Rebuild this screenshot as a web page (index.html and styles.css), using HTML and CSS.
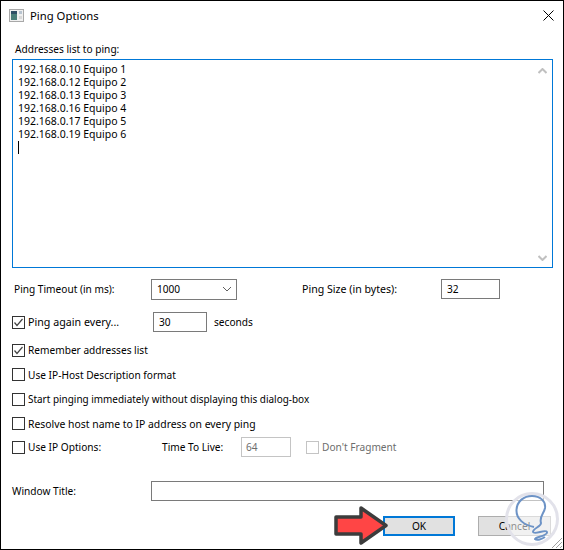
FILE: index.html
```html
<!DOCTYPE html>
<html lang="en">
<head>
    <meta charset="UTF-8">
    <title>Ping Options</title>
    <link rel="stylesheet" href="styles.css">
</head>
<body>
    <div class="dialog">
        <div class="titlebar">
            <svg class="app-icon" width="15" height="13" viewBox="0 0 15 13">
                <rect x="0.5" y="0.5" width="14" height="12" fill="#f0f0f0" stroke="#a8a8a8"/>
                <rect x="2" y="2" width="6" height="9" fill="#4a7d78"/>
                <rect x="2" y="2" width="6" height="3" fill="#2f4f66"/>
                <rect x="10" y="2" width="3" height="3" fill="#b8c4d0"/>
                <rect x="10" y="7" width="3" height="3" fill="#d8d8d8"/>
            </svg>
            <span class="title">Ping Options</span>
            <svg class="close" width="11" height="11" viewBox="0 0 11 11">
                <path d="M0.5 0.5L10.5 10.5M10.5 0.5L0.5 10.5" stroke="#000" stroke-width="1" fill="none"/>
            </svg>
        </div>

        <div class="content">
            <div class="list-label">Addresses list to ping:</div>
            <div class="address-box">
                <div class="address-lines">
                    <div>192.168.0.10 Equipo 1</div>
                    <div>192.168.0.12 Equipo 2</div>
                    <div>192.168.0.13 Equipo 3</div>
                    <div>192.168.0.16 Equipo 4</div>
                    <div>192.168.0.17 Equipo 5</div>
                    <div>192.168.0.19 Equipo 6</div>
                    <div class="caret"></div>
                </div>
                <div class="scrollbar">
                    <svg width="9" height="6" viewBox="0 0 9 6"><path d="M0.5 5L4.5 1L8.5 5" stroke="#c0c0c0" stroke-width="2" fill="none"/></svg>
                    <svg width="9" height="6" viewBox="0 0 9 6"><path d="M0.5 1L4.5 5L8.5 1" stroke="#c0c0c0" stroke-width="2" fill="none"/></svg>
                </div>
            </div>

            <div class="row row-timeout">
                <span class="lbl-timeout">Ping Timeout (in ms):</span>
                <div class="field select">
                    <span>1000</span>
                    <svg width="10" height="6" viewBox="0 0 10 6"><path d="M1 1L5 5L9 1" stroke="#606060" stroke-width="1" fill="none"/></svg>
                </div>
                <span class="lbl-size">Ping Size (in bytes):</span>
                <div class="field size">32</div>
            </div>

            <div class="row row-again">
                <span class="check on"><svg width="13" height="13" viewBox="0 0 13 13"><path d="M2.5 6.5L5 9.5L10.5 3" stroke="#444" stroke-width="1.2" fill="none"/></svg></span>
                <span class="lbl-again">Ping again every...</span>
                <div class="field every">30</div>
                <span class="seconds">seconds</span>
            </div>

            <div class="row row-check first">
                <span class="check on"><svg width="13" height="13" viewBox="0 0 13 13"><path d="M2.5 6.5L5 9.5L10.5 3" stroke="#444" stroke-width="1.2" fill="none"/></svg></span>
                <span>Remember addresses list</span>
            </div>
            <div class="row row-check">
                <span class="check"></span>
                <span>Use IP-Host Description format</span>
            </div>
            <div class="row row-check">
                <span class="check"></span>
                <span class="lbl-start">Start pinging immediately without displaying this dialog-box</span>
            </div>
            <div class="row row-check">
                <span class="check"></span>
                <span class="lbl-resolve">Resolve host name to IP address on every ping</span>
            </div>

            <div class="row row-ip">
                <span class="check"></span>
                <span class="lbl-ip">Use IP Options:</span>
                <span class="lbl-ttl">Time To Live:</span>
                <div class="field ttl">64</div>
                <span class="check off"></span>
                <span class="disabled">Don't Fragment</span>
            </div>

            <div class="row row-title">
                <span class="lbl-title">Window Title:</span>
                <div class="field title-input"></div>
            </div>

            <div class="row row-buttons">
                <div class="btn ok">OK</div>
                <div class="btn cancel">Cancel</div>
            </div>
        </div>

        <!-- flecha roja sobre el boton OK -->
        <svg class="arrow" width="58" height="44" viewBox="0 0 58 44">
            <path d="M4 12H29V3L54 20.5L29 38V29H4Z" fill="#ff4545" stroke="#3c3c3c" stroke-width="3.5" stroke-linejoin="round"/>
        </svg>

        <!-- marca de agua -->
        <svg class="watermark" width="56" height="56" viewBox="0 0 56 56">
            <circle cx="28" cy="27" r="25.5" fill="#fff" fill-opacity="0.55" stroke="#e2e2ea" stroke-width="3"/>
            <path d="M30 35C20 33 12 27 12.5 18C13 9 20 4 28 4C36 4 42 9 41 16C40 22 35 24 37 31C37 35 29 36 29 40C30 43 42 37 43 40C44 44 31 45 31 47C33 49 38 47 41 45" fill="none" stroke="#6d93c6" stroke-width="2"/>
        </svg>

        <svg class="grip" width="12" height="12" viewBox="0 0 12 12">
            <path d="M11 1L1 11M11 5L5 11M11 9L9 11" stroke="#a0a0a0" stroke-width="1" fill="none"/>
        </svg>
    </div>
</body>
</html>
```

FILE: styles.css
```css
html, body {
    margin: 0;
    padding: 0;
}
body {
    width: 564px;
    height: 550px;
    overflow: hidden;
    background-color: #fff;
    font-family: "Noto Sans", "Open Sans", sans-serif;
    font-size: 10.15px;
    color: #000;
}
.dialog {
    position: relative;
    box-sizing: border-box;
    width: 564px;
    height: 550px;
    border: 1px solid #000;
    overflow: hidden;
}
.titlebar {
    box-sizing: border-box;
    display: flex;
    align-items: center;
    height: 30px;
    padding: 0 0 2px 8px;
}
.title {
    margin-left: 6px;
    font-size: 11.3px;
    flex: 1;
}
.close {
    margin-right: 9px;
}
.content {
    padding: 0 11px 0 11px;
}
.list-label {
    height: 28px;
    padding: 11px 0 0 3px;
    box-sizing: border-box;
    line-height: 14px;
}
.address-box {
    display: flex;
    justify-content: space-between;
    box-sizing: border-box;
    width: 541px;
    height: 209px;
    border: 1px solid #0078d7;
}
.address-lines {
    padding: 3px 0 0 5px;
    line-height: 13px;
    font-size: 10.5px;
}
.caret {
    width: 1px;
    height: 13px;
    background-color: #000;
}
.scrollbar {
    display: flex;
    flex-direction: column;
    justify-content: space-between;
    padding: 8px 5px 6px 0;
}
.row {
    display: flex;
    align-items: center;
}
.field {
    box-sizing: border-box;
    display: flex;
    align-items: center;
    border: 1px solid #7a7a7a;
    padding-left: 5px;
}
.row-timeout {
    margin-top: 11px;
    height: 20px;
}
.lbl-timeout {
    width: 136px;
    padding-left: 2px;
    box-sizing: border-box;
    margin-right: 3px;
}
.select {
    width: 86px;
    height: 21px;
    justify-content: space-between;
    padding-right: 4px;
}
.lbl-size {
    margin-left: 65px;
    width: 139px;
    font-size: 10.6px;
}
.size {
    width: 59px;
    height: 20px;
}
.row-again {
    margin-top: 13px;
    height: 20px;
}
.check {
    box-sizing: border-box;
    width: 13px;
    height: 13px;
    border: 1px solid #333;
    flex: none;
    margin-right: 3px;
    display: block;
}
.check svg {
    display: block;
    margin: -1px;
}
.lbl-again {
    width: 125px;
    font-size: 10.7px;
}
.every {
    width: 54px;
    height: 20px;
}
.seconds {
    margin-left: 7px;
}
.row-check {
    height: 24.5px;
}
.row-check.first {
    margin-top: 6px;
}
.lbl-start {
    font-size: 9.95px;
}
.lbl-resolve {
    font-size: 10.4px;
}
.row-ip {
    height: 20px;
    margin-top: 1px;
}
.lbl-ip {
    width: 134px;
}
.lbl-ttl {
    width: 79px;
}
.ttl {
    width: 50px;
    height: 20px;
    border-color: #c4c4c4;
    color: #6d6d6d;
    padding-left: 4px;
}
.check.off {
    margin-left: 15px;
    border-color: #c4c4c4;
}
.disabled {
    color: #6d6d6d;
}
.row-title {
    margin-top: 24px;
    height: 20px;
}
.lbl-title {
    width: 139px;
}
.title-input {
    width: 393px;
    height: 20px;
}
.row-buttons {
    margin-top: 15px;
    justify-content: flex-end;
    padding-right: 1px;
}
.btn {
    box-sizing: border-box;
    display: flex;
    align-items: center;
    justify-content: center;
    height: 20px;
    width: 73px;
    background-color: #e1e1e1;
    border: 1px solid #adadad;
}
.ok {
    width: 72px;
    border: 2px solid #0078d7;
    margin-right: 23px;
}
.arrow {
    position: absolute;
    left: 331px;
    top: 504px;
}
.watermark {
    position: absolute;
    left: 503px;
    top: 491px;
}
.grip {
    position: absolute;
    right: 0;
    bottom: 0;
}
```
